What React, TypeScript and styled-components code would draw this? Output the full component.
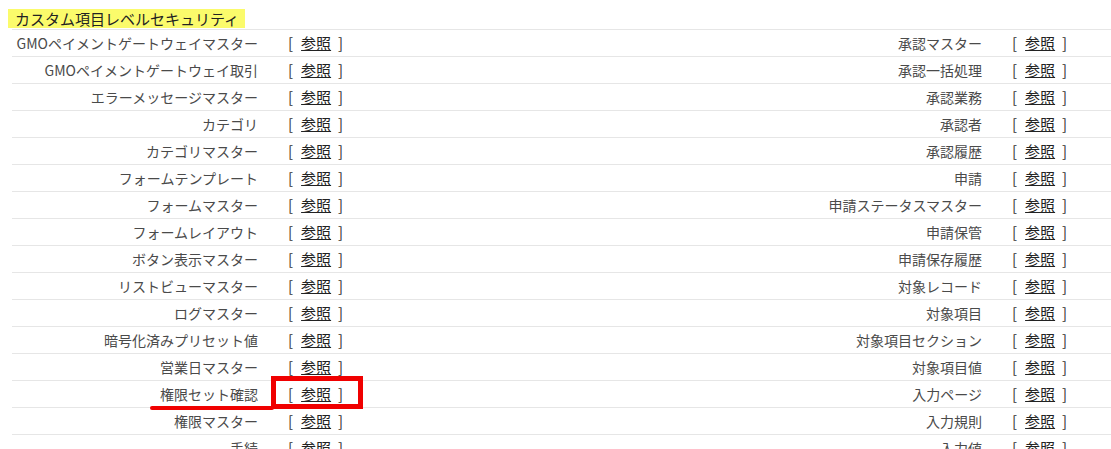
import React from "react";
import styled, { createGlobalStyle } from "styled-components";

const GlobalStyle = createGlobalStyle`
  html, body {
    margin: 0;
    padding: 0;
    background: #ffffff;
    overflow: hidden;
  }
  body {
    font-family: "Noto Sans CJK JP", "Liberation Sans", sans-serif;
  }
`;

const Page = styled.div`
  width: 1111px;
  height: 449px;
  overflow: hidden;
  padding-top: 9px;
  box-sizing: border-box;
`;

const SectionTitle = styled.div`
  display: block;
  width: fit-content;
  margin-left: 8px;
  padding: 0 6px 0 7px;
  height: 19px;
  line-height: 19px;
  background: #fbfb6b;
  color: #222;
  font-size: 15px;
`;

const Table = styled.div`
  margin: 1px 0 0 12px;
  display: flex;
  flex-direction: column;
`;

const Row = styled.div`
  display: grid;
  grid-template-columns: 256px 468px 256px 1fr;
  height: 27px;
  box-sizing: border-box;
  border-top: 1px solid #e6e6e6;
  font-size: 14px;
  line-height: 26px;
`;

const Label = styled.div`
  position: relative;
  text-align: right;
  padding-right: 10px;
  color: #4a4a4a;
  white-space: nowrap;
`;

const LinkCell = styled.div`
  position: relative;
  padding-left: 20px;
  color: #222;
  white-space: nowrap;
`;

const Bracket = styled.span`
  color: #333;
  font-size: 15px;
`;

const RefLink = styled.a`
  color: #222;
  text-decoration: underline;
  cursor: pointer;
  margin: 0 7px 0 8px;
  font-size: 15px;
`;

/* red annotation marks drawn over the table */
const MarkBox = styled.div`
  position: absolute;
  left: 3px;
  top: -5px;
  width: 92px;
  height: 33px;
  box-sizing: border-box;
  border: 5px solid #f00000;
  pointer-events: none;
`;

const MarkLine = styled.div`
  position: absolute;
  left: 138px;
  top: 25px;
  width: 124px;
  height: 4px;
  border-radius: 2px;
  background: #f00000;
  pointer-events: none;
`;

const left = [
  "GMOペイメントゲートウェイマスター",
  "GMOペイメントゲートウェイ取引",
  "エラーメッセージマスター",
  "カテゴリ",
  "カテゴリマスター",
  "フォームテンプレート",
  "フォームマスター",
  "フォームレイアウト",
  "ボタン表示マスター",
  "リストビューマスター",
  "ログマスター",
  "暗号化済みプリセット値",
  "営業日マスター",
  "権限セット確認",
  "権限マスター",
  "手続",
];

const right = [
  "承認マスター",
  "承認一括処理",
  "承認業務",
  "承認者",
  "承認履歴",
  "申請",
  "申請ステータスマスター",
  "申請保管",
  "申請保存履歴",
  "対象レコード",
  "対象項目",
  "対象項目セクション",
  "対象項目値",
  "入力ページ",
  "入力規則",
  "入力値",
];

const Ref: React.FC<{ marked?: boolean }> = ({ marked }) => (
  <LinkCell>
    <Bracket>[</Bracket>
    <RefLink>参照</RefLink>
    <Bracket>]</Bracket>
    {marked && <MarkBox />}
  </LinkCell>
);

export default function App() {
  return (
    <>
      <GlobalStyle />
      <Page>
        <SectionTitle>カスタム項目レベルセキュリティ</SectionTitle>
        <Table>
          {left.map((name, i) => {
            const marked = name === "権限セット確認";
            return (
              <Row key={name}>
                <Label>
                  {name}
                  {marked && <MarkLine />}
                </Label>
                <Ref marked={marked} />
                <Label>{right[i]}</Label>
                <Ref />
              </Row>
            );
          })}
        </Table>
      </Page>
    </>
  );
}
